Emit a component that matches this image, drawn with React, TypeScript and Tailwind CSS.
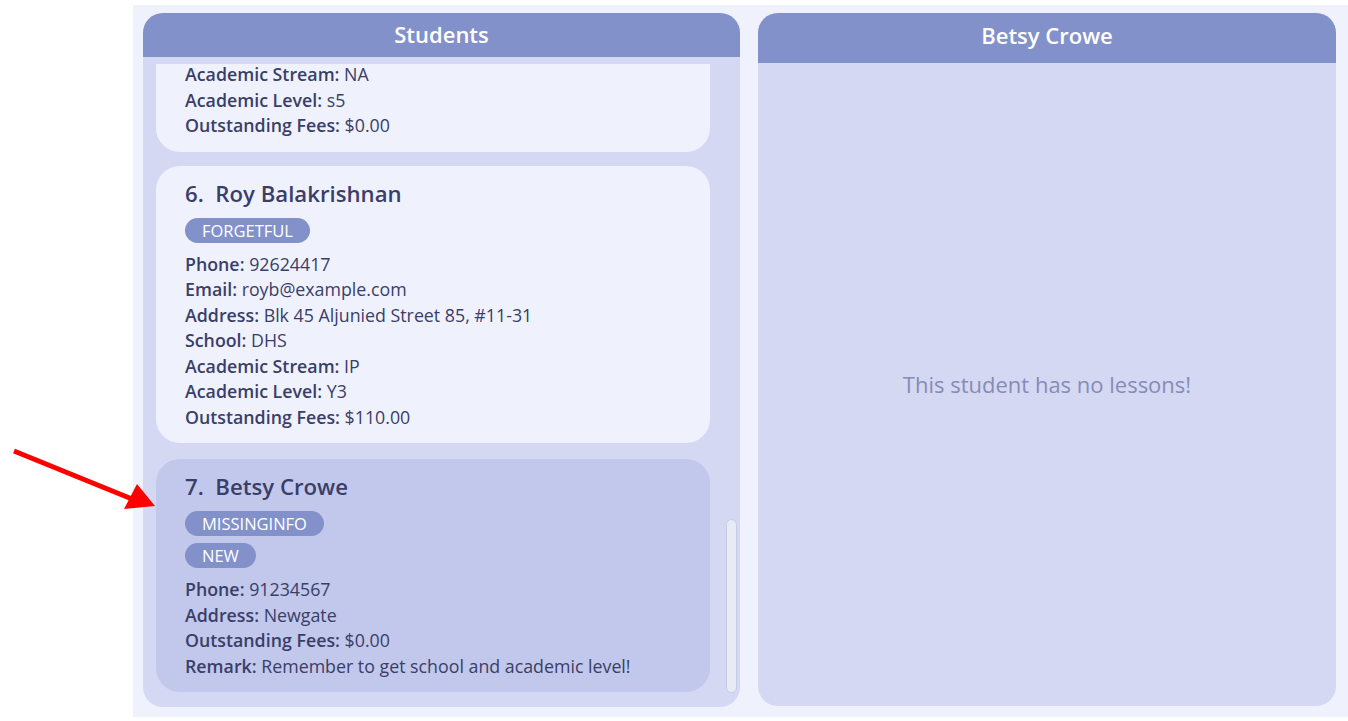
import React from "react";

type Field = [string, string];

function Tag({ label }: { label: string }) {
  return (
    <div className="flex">
      <span className="inline-block h-[25px] rounded-full bg-[#8391ca] px-[17px] text-[16.5px] font-medium leading-[25px] text-white">
        {label}
      </span>
    </div>
  );
}

function Lines({ fields, tightFirst }: { fields: Field[]; tightFirst?: boolean }) {
  return (
    <div>
      {fields.map(([k, v], i) => (
        <div
          key={k}
          className={
            "text-[17.8px] text-[#3a3e68] whitespace-nowrap " +
            (tightFirst && i === 0 ? "h-[23.75px] leading-[21.5px]" : "leading-[25.5px]")
          }
        >
          <span className="font-semibold">{k}:</span> {v}
        </div>
      ))}
    </div>
  );
}

function Card({
  index,
  name,
  tags,
  fields,
  selected,
}: {
  index: number;
  name: string;
  tags: string[];
  fields: Field[];
  selected?: boolean;
}) {
  return (
    <div
      className={
        "w-[554px] rounded-[24px] pl-[29px] pr-[20px] pt-[14px] pb-[13px] " +
        (selected ? "bg-[#c1c8eb]" : "bg-[#eff2fd]")
      }
    >
      <div className="whitespace-pre text-[22.2px] font-semibold leading-[28px] text-[#3a3e68]">
        {index + ".  " + name}
      </div>
      <div className="mt-[10px] flex flex-col gap-[7px]">
        {tags.map((t) => (
          <Tag key={t} label={t} />
        ))}
      </div>
      <div className="mt-[9px]">
        <Lines fields={fields} />
      </div>
    </div>
  );
}

export default function App() {
  return (
    <div
      className="relative h-[721px] w-[1348px] overflow-hidden bg-white"
      style={{ fontFamily: '"Open Sans", "Noto Sans", sans-serif' }}
    >
      <div className="ml-[133px] mt-[5px] flex h-[712px] gap-[18px] bg-[#eff2fd] pl-[10px] pr-[12px] pt-[8px]">
        {/* Students panel */}
        <div className="flex h-[694px] w-[597px] flex-col overflow-hidden rounded-[20px] bg-[#d4d8f3]">
          <div className="flex h-[44px] shrink-0 items-center justify-center bg-[#8391ca] pb-[2px] text-[22px] font-semibold text-white">
            Students
          </div>
          <div className="relative mt-[7px] h-[636px]">
            <div className="pl-[13px]">
              <div className="w-[554px] rounded-b-[24px] bg-[#eff2fd] pl-[29px] pb-[13px]">
                <Lines
                  tightFirst
                  fields={[
                    ["Academic Stream", "NA"],
                    ["Academic Level", "s5"],
                    ["Outstanding Fees", "$0.00"],
                  ]}
                />
              </div>
              <div className="mt-[14px]">
                <Card
                  index={6}
                  name="Roy Balakrishnan"
                  tags={["FORGETFUL"]}
                  fields={[
                    ["Phone", "92624417"],
                    ["Email", "royb@example.com"],
                    ["Address", "Blk 45 Aljunied Street 85, #11-31"],
                    ["School", "DHS"],
                    ["Academic Stream", "IP"],
                    ["Academic Level", "Y3"],
                    ["Outstanding Fees", "$110.00"],
                  ]}
                />
              </div>
              <div className="mt-[16px]">
                <Card
                  index={7}
                  name="Betsy Crowe"
                  tags={["MISSINGINFO", "NEW"]}
                  selected
                  fields={[
                    ["Phone", "91234567"],
                    ["Address", "Newgate"],
                    ["Outstanding Fees", "$0.00"],
                    ["Remark", "Remember to get school and academic level!"],
                  ]}
                />
              </div>
            </div>
            {/* scrollbar thumb */}
            <div className="absolute left-[583px] top-[455px] h-[174px] w-[11px] rounded-[6px] border border-[#c6cbe6] bg-[#e8ebf6]" />
          </div>
        </div>

        {/* Detail panel */}
        <div className="flex h-[693px] w-[578px] flex-col overflow-hidden rounded-[20px] bg-[#d4d8f3]">
          <div className="flex h-[50px] shrink-0 items-center justify-center bg-[#8391ca] pb-[5px] text-[22px] font-semibold text-white">
            Betsy Crowe
          </div>
          <div className="flex flex-1 items-start justify-center pt-[305px] text-[22px] text-[#878cb6]">
            This student has no lessons!
          </div>
        </div>
      </div>

      {/* red arrow annotation */}
      <svg className="absolute left-0 top-[440px]" width="170" height="80" viewBox="0 0 170 80">
        <line x1="14" y1="11" x2="132" y2="59" stroke="#ff0000" strokeWidth="5" />
        <polygon points="155,66 124,69 137,44" fill="#ff0000" />
      </svg>
    </div>
  );
}
